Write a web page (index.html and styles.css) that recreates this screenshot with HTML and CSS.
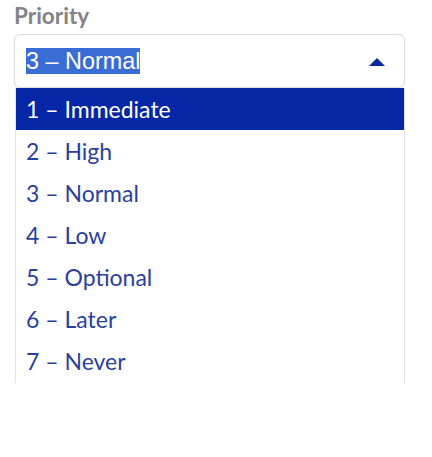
FILE: index.html
```html
<!DOCTYPE html>
<html>
<head>
<meta charset="utf-8">
<link rel="stylesheet" href="styles.css">
</head>
<body>
<div class="field">
  <div class="label">Priority</div>
  <div class="select">
    <span class="value"><span class="sel">3 – Normal</span></span>
    <svg class="arrow" width="16" height="8" viewBox="0 0 16 8"><path d="M0 8 L8 0 L16 8 Z" fill="#0a2a9e"/></svg>
  </div>
  <ul class="list">
    <li class="opt active">1 – Immediate</li>
    <li class="opt">2 – High</li>
    <li class="opt">3 – Normal</li>
    <li class="opt">4 – Low</li>
    <li class="opt">5 – Optional</li>
    <li class="opt">6 – Later</li>
    <li class="opt">7 – Never</li>
  </ul>
</div>
</body>
</html>
```
FILE: styles.css
```css
html, body {
  margin: 0;
  padding: 0;
  background: #fff;
}
.field {
  padding: 2px 27px 0 14px;
  display: flex;
  flex-direction: column;
}
.label {
  font-family: Lato, "Liberation Sans", sans-serif;
  font-weight: 700;
  font-size: 22.5px;
  line-height: 28px;
  color: #838388;
  height: 32px;
}
.select {
  height: 52px;
  border: 1px solid #dcdcdc;
  border-radius: 6px;
  display: flex;
  align-items: center;
  padding: 0 19px 0 11px;
  justify-content: space-between;
  box-shadow: 0 1px 1px rgba(0,0,0,0.08);
}
.value {
  font-family: "Liberation Sans", Arial, sans-serif;
  font-size: 23.4px;
  color: #1e2f8f;
}
.sel {
  background: #3a6cd6;
  color: #fff;
}
.arrow {
  display: block;
  margin-top: 1px;
}
.list {
  list-style: none;
  margin: 0 0 0 1px;
  padding: 0;
  border-right: 1px solid #e2e2e2;
  border-left: 1px solid #e2e2e2;
  height: 295px;
  overflow: hidden;
}
.opt {
  height: 42px;
  display: flex;
  align-items: center;
  padding-left: 10px;
  font-family: Lato, "Liberation Sans", sans-serif;
  font-size: 23px;
  color: #2b3f9e;
}
.opt.active {
  background: #0527a6;
  color: #fff;
}
```
